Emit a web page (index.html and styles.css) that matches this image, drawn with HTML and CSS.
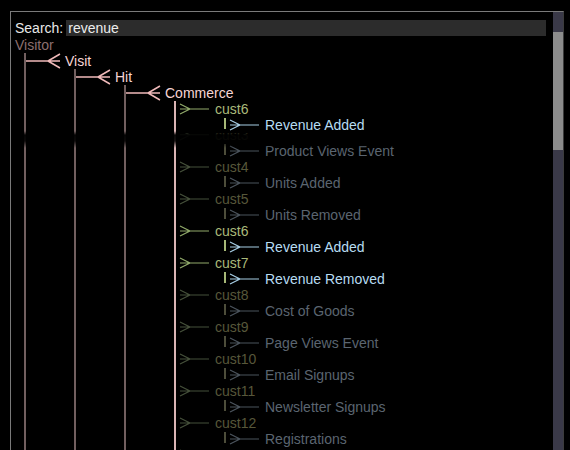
FILE: index.html
```html
<!DOCTYPE html>
<html lang="en">
<head>
<meta charset="utf-8">
<title>Schema search</title>
<link rel="stylesheet" href="styles.css">
</head>
<body>
<svg class="defs" width="0" height="0" aria-hidden="true">
  <symbol id="crow" viewBox="0 0 39 16"><path d="M0 8H34M22 8L34 1M22 8L34 15" fill="none" stroke="currentColor" stroke-width="1.5"/></symbol>
  <symbol id="fork" viewBox="0 0 39 16"><path d="M4 8H33M4 3L14 8L4 13" fill="none" stroke="currentColor" stroke-width="1.2"/></symbol>
</svg>
<div class="frame">
  <div class="pane">
    <div class="search">
      <span class="search-label">Search:</span>
      <input class="search-field" type="text" value="revenue">
    </div>
    <div class="tree">
      <div class="row"><span class="lbl visitor">Visitor</span></div>
      <div class="kids">
        <div class="row pink"><svg class="conn"><use href="#crow"/></svg><span class="lbl">Visit</span></div>
        <div class="kids">
          <div class="row pink"><svg class="conn"><use href="#crow"/></svg><span class="lbl">Hit</span></div>
          <div class="kids">
            <div class="row pink"><svg class="conn"><use href="#crow"/></svg><span class="lbl">Commerce</span></div>
            <div class="kids bright">
              <div class="row cust on"><svg class="conn"><use href="#fork"/></svg><span class="lbl">cust6</span></div>
              <div class="leaves">
                <div class="row leaf on"><i class="tick"></i><svg class="conn"><use href="#fork"/></svg><span class="lbl">Revenue Added</span></div>
              </div>

              <div class="fold">
                <div class="row cust off"><svg class="conn"><use href="#fork"/></svg><span class="lbl">cust3</span></div>
              </div>
              <div class="leaves">
                <div class="row leaf off"><i class="tick"></i><svg class="conn"><use href="#fork"/></svg><span class="lbl">Product Views Event</span></div>
              </div>

              <div class="row cust off"><svg class="conn"><use href="#fork"/></svg><span class="lbl">cust4</span></div>
              <div class="leaves">
                <div class="row leaf off"><i class="tick"></i><svg class="conn"><use href="#fork"/></svg><span class="lbl">Units Added</span></div>
              </div>

              <div class="row cust off"><svg class="conn"><use href="#fork"/></svg><span class="lbl">cust5</span></div>
              <div class="leaves">
                <div class="row leaf off"><i class="tick"></i><svg class="conn"><use href="#fork"/></svg><span class="lbl">Units Removed</span></div>
              </div>

              <div class="row cust on"><svg class="conn"><use href="#fork"/></svg><span class="lbl">cust6</span></div>
              <div class="leaves">
                <div class="row leaf on"><i class="tick"></i><svg class="conn"><use href="#fork"/></svg><span class="lbl">Revenue Added</span></div>
              </div>

              <div class="row cust on"><svg class="conn"><use href="#fork"/></svg><span class="lbl">cust7</span></div>
              <div class="leaves">
                <div class="row leaf on"><i class="tick"></i><svg class="conn"><use href="#fork"/></svg><span class="lbl">Revenue Removed</span></div>
              </div>

              <div class="row cust off"><svg class="conn"><use href="#fork"/></svg><span class="lbl">cust8</span></div>
              <div class="leaves">
                <div class="row leaf off"><i class="tick"></i><svg class="conn"><use href="#fork"/></svg><span class="lbl">Cost of Goods</span></div>
              </div>

              <div class="row cust off"><svg class="conn"><use href="#fork"/></svg><span class="lbl">cust9</span></div>
              <div class="leaves">
                <div class="row leaf off"><i class="tick"></i><svg class="conn"><use href="#fork"/></svg><span class="lbl">Page Views Event</span></div>
              </div>

              <div class="row cust off"><svg class="conn"><use href="#fork"/></svg><span class="lbl">cust10</span></div>
              <div class="leaves">
                <div class="row leaf off"><i class="tick"></i><svg class="conn"><use href="#fork"/></svg><span class="lbl">Email Signups</span></div>
              </div>

              <div class="row cust off"><svg class="conn"><use href="#fork"/></svg><span class="lbl">cust11</span></div>
              <div class="leaves">
                <div class="row leaf off"><i class="tick"></i><svg class="conn"><use href="#fork"/></svg><span class="lbl">Newsletter Signups</span></div>
              </div>

              <div class="row cust off"><svg class="conn"><use href="#fork"/></svg><span class="lbl">cust12</span></div>
              <div class="leaves">
                <div class="row leaf off"><i class="tick"></i><svg class="conn"><use href="#fork"/></svg><span class="lbl">Registrations</span></div>
              </div>

              <div class="row cust off"><svg class="conn"><use href="#fork"/></svg><span class="lbl">cust13</span></div>
              <div class="leaves">
                <div class="row leaf off"><i class="tick"></i><svg class="conn"><use href="#fork"/></svg><span class="lbl">Orders</span></div>
              </div>
            </div>
          </div>
        </div>
      </div>
    </div>
    <div class="shade"></div>
  </div>
  <div class="scrollbar"><div class="thumb"></div></div>
</div>
</body>
</html>
```

FILE: styles.css
```css
html, body {
  margin: 0;
  padding: 0;
  background: #000;
  overflow: hidden;
}

body {
  font-family: "Liberation Sans", Arial, sans-serif;
  font-size: 14px;
  line-height: 16px;
}

.defs {
  position: absolute;
  width: 0;
  height: 0;
}

.frame {
  margin: 11px 0 0 10px;
  width: 554px;
  height: 460px;
  box-sizing: border-box;
  border: 1px solid #7a7a7a;
  border-right-color: #3c3c3c;
  display: flex;
}

.pane {
  flex: 1;
  min-width: 0;
  position: relative;
  overflow: hidden;
  padding: 8px 0 0 4px;
}

.scrollbar {
  width: 10px;
  flex: none;
  box-sizing: border-box;
  padding-top: 20px;
  background: #3a3948;
}

.thumb {
  height: 118px;
  background: #8c8c8c;
}

.search {
  display: flex;
  align-items: center;
  height: 16px;
  margin-right: 7px;
  color: #e8e8e8;
}

.search-field {
  flex: 1;
  min-width: 0;
  height: 16px;
  margin: 0 0 0 3px;
  padding: 0 0 0 2px;
  box-sizing: border-box;
  border: 0;
  outline: none;
  background: #2c2c2c;
  color: #ececec;
  font: inherit;
  line-height: 16px;
}

.tree {
  margin-top: 1px;
}

.row {
  display: flex;
  align-items: center;
  height: 16px;
  white-space: nowrap;
}

.conn {
  width: 39px;
  height: 16px;
  flex: none;
  overflow: visible;
}

.visitor {
  color: #8c6f6f;
}

.kids {
  margin-left: 48px;
  border-left: 2px solid #725f5f;
}

.tree > .kids {
  margin-left: 9px;
}

.kids.bright {
  border-left-color: #dab4b4;
}

.leaves {
  margin-left: 48px;
}

.tick {
  width: 2px;
  height: 11px;
  flex: none;
  align-self: flex-start;
  margin-top: 1px;
}

.fold {
  height: 10px;
  overflow: hidden;
}

.fold > .row {
  margin-top: -6px;
}

.pink .conn { color: #efb9b9; }
.pink .lbl { color: #f6d5d5; }

.cust.on .conn { color: #91aa6a; }
.cust.on .lbl { color: #aab97a; }
.cust.off .conn { color: #45503a; }
.cust.off .lbl { color: #57573a; }

.leaf.on .tick { background: #a7b877; }
.leaf.on .conn { color: #a6cde4; }
.leaf.on .lbl { color: #b7dcf2; }
.leaf.off .tick { background: #4d4d3a; }
.leaf.off .conn { color: #4b545d; }
.leaf.off .lbl { color: #5b6570; }

.shade {
  position: absolute;
  left: 0;
  right: 0;
  top: 119px;
  height: 17px;
  background: linear-gradient(to bottom,
    rgba(0, 0, 0, 0) 0,
    rgba(0, 0, 0, 0.95) 4px,
    rgba(0, 0, 0, 0.9) 10px,
    rgba(0, 0, 0, 0) 17px);
  pointer-events: none;
}
```
